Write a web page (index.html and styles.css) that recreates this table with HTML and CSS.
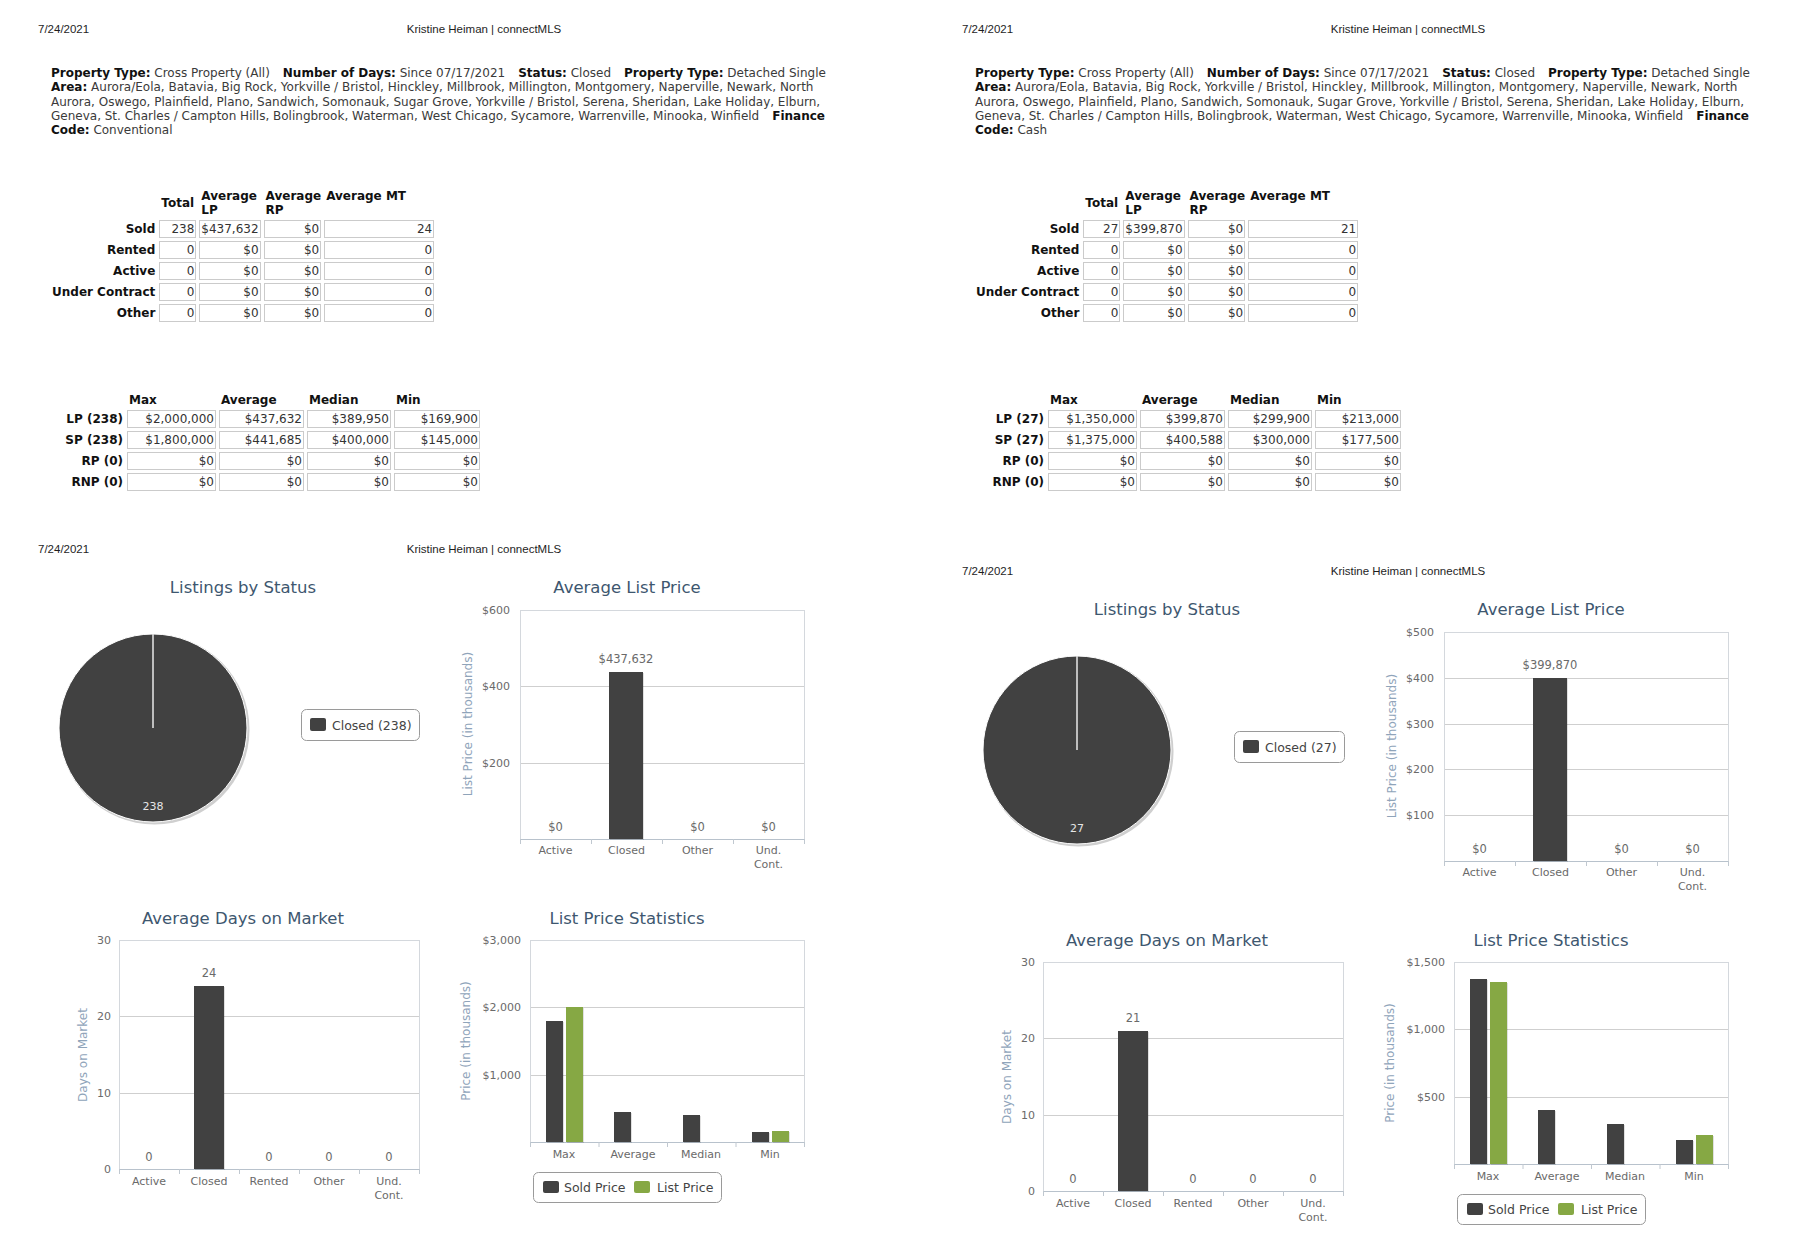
FILE: index.html
```html
<!DOCTYPE html>
<html lang="en">
<head>
<meta charset="utf-8">
<title>connectMLS Market Report</title>
<link rel="stylesheet" href="styles.css">
</head>
<body>
<div class="spread">

  <!-- ================= LEFT SHEET (Conventional) ================= -->
  <section class="sheet sheet-left">
    <div class="report">
      <header class="hdr"><span class="hdr-date">7/24/2021</span><span class="hdr-name">Kristine Heiman | connectMLS</span></header>
      <p class="criteria"><b>Property Type:</b> Cross Property (All)<span class="sp"></span><b>Number of Days:</b> Since 07/17/2021<span class="sp"></span><b>Status:</b> Closed<span class="sp"></span><b>Property Type:</b> Detached Single<br><b>Area:</b> Aurora/Eola, Batavia, Big Rock, Yorkville / Bristol, Hinckley, Millbrook, Millington, Montgomery, Naperville, Newark, North Aurora, Oswego, Plainfield, Plano, Sandwich, Somonauk, Sugar Grove, Yorkville / Bristol, Serena, Sheridan, Lake Holiday, Elburn, Geneva, St. Charles / Campton Hills, Bolingbrook, Waterman, West Chicago, Sycamore, Warrenville, Minooka, Winfield<span class="sp"></span><b>Finance Code:</b> Conventional</p>

      <table class="t1">
        <colgroup><col class="c-lbl"><col class="c-tot"><col class="c-lp"><col class="c-rp"><col class="c-mt"></colgroup>
        <thead><tr><th></th><th class="mid">Total</th><th>Average LP</th><th>Average RP</th><th>Average MT</th></tr></thead>
        <tbody>
          <tr><th>Sold</th><td>238</td><td>$437,632</td><td>$0</td><td>24</td></tr>
          <tr><th>Rented</th><td>0</td><td>$0</td><td>$0</td><td>0</td></tr>
          <tr><th>Active</th><td>0</td><td>$0</td><td>$0</td><td>0</td></tr>
          <tr><th>Under Contract</th><td>0</td><td>$0</td><td>$0</td><td>0</td></tr>
          <tr><th>Other</th><td>0</td><td>$0</td><td>$0</td><td>0</td></tr>
        </tbody>
      </table>

      <table class="t2">
        <colgroup><col class="c-lbl"><col class="c-max"><col class="c-avg"><col class="c-med"><col class="c-min"></colgroup>
        <thead><tr><th></th><th>Max</th><th>Average</th><th>Median</th><th>Min</th></tr></thead>
        <tbody>
          <tr><th>LP (238)</th><td>$2,000,000</td><td>$437,632</td><td>$389,950</td><td>$169,900</td></tr>
          <tr><th>SP (238)</th><td>$1,800,000</td><td>$441,685</td><td>$400,000</td><td>$145,000</td></tr>
          <tr><th>RP (0)</th><td>$0</td><td>$0</td><td>$0</td><td>$0</td></tr>
          <tr><th>RNP (0)</th><td>$0</td><td>$0</td><td>$0</td><td>$0</td></tr>
        </tbody>
      </table>
    </div>

    <div class="chartpage">
      <header class="hdr"><span class="hdr-date">7/24/2021</span><span class="hdr-name">Kristine Heiman | connectMLS</span></header>
      <div class="charts">
        <!-- Listings by Status -->
        <svg class="chart" width="390" height="331" viewBox="0 0 390 331">
          <text class="ttl" x="203" y="24" text-anchor="middle">Listings by Status</text>
          <circle class="pie-sh" cx="114.5" cy="160.5" r="95"/>
          <circle class="pie" cx="113" cy="159" r="94"/>
          <line class="pie-cut" x1="113" y1="159" x2="113" y2="65"/>
          <text class="pie-lbl" x="113" y="241" text-anchor="middle">238</text>
          <rect class="lg" x="261.5" y="140.5" width="118" height="31" rx="5"/>
          <rect class="sw" x="270" y="149" width="16" height="13" rx="2"/>
          <text class="lgt" x="292" y="161">Closed (238)</text>
        </svg>

        <!-- Average List Price -->
        <svg class="chart" width="400" height="331" viewBox="0 0 400 331">
          <text class="ttl" x="197" y="24" text-anchor="middle">Average List Price</text>
          <line class="grid" x1="90" y1="117.5" x2="374" y2="117.5"/>
          <line class="grid" x1="90" y1="194.5" x2="374" y2="194.5"/>
          <rect class="plot" x="90.5" y="41.5" width="284" height="229"/>
          <line class="axis" x1="90" y1="270.5" x2="375" y2="270.5"/>
          <g class="ticks"><line x1="90.5" y1="270" x2="90.5" y2="275"/><line x1="161.5" y1="270" x2="161.5" y2="275"/><line x1="232.5" y1="270" x2="232.5" y2="275"/><line x1="303.5" y1="270" x2="303.5" y2="275"/><line x1="374.5" y1="270" x2="374.5" y2="275"/></g>
          <text class="yl" x="80" y="45" text-anchor="end">$600</text>
          <text class="yl" x="80" y="121" text-anchor="end">$400</text>
          <text class="yl" x="80" y="198" text-anchor="end">$200</text>
          <text class="at" transform="translate(42,155) rotate(-90)" text-anchor="middle">List Price (in thousands)</text>
          <rect class="bar-sh" x="180" y="104" width="34" height="167"/>
          <rect class="bar" x="179" y="103" width="34" height="167"/>
          <text class="dl" x="196" y="94" text-anchor="middle">$437,632</text>
          <text class="dl" x="125.5" y="262" text-anchor="middle">$0</text>
          <text class="dl" x="267.5" y="262" text-anchor="middle">$0</text>
          <text class="dl" x="338.5" y="262" text-anchor="middle">$0</text>
          <text class="cat" x="125.5" y="285" text-anchor="middle">Active</text>
          <text class="cat" x="196.5" y="285" text-anchor="middle">Closed</text>
          <text class="cat" x="267.5" y="285" text-anchor="middle">Other</text>
          <text class="cat" x="338.5" y="285" text-anchor="middle">Und.</text>
          <text class="cat" x="338.5" y="299" text-anchor="middle">Cont.</text>
        </svg>

        <!-- Average Days on Market -->
        <svg class="chart" width="390" height="331" viewBox="0 0 390 331">
          <text class="ttl" x="203" y="24" text-anchor="middle">Average Days on Market</text>
          <line class="grid" x1="79" y1="116.5" x2="379" y2="116.5"/>
          <line class="grid" x1="79" y1="193.5" x2="379" y2="193.5"/>
          <rect class="plot" x="79.5" y="40.5" width="300" height="229"/>
          <line class="axis" x1="79" y1="269.5" x2="380" y2="269.5"/>
          <g class="ticks"><line x1="79.5" y1="269" x2="79.5" y2="274"/><line x1="139.5" y1="269" x2="139.5" y2="274"/><line x1="199.5" y1="269" x2="199.5" y2="274"/><line x1="259.5" y1="269" x2="259.5" y2="274"/><line x1="319.5" y1="269" x2="319.5" y2="274"/><line x1="379.5" y1="269" x2="379.5" y2="274"/></g>
          <text class="yl" x="71" y="44" text-anchor="end">30</text>
          <text class="yl" x="71" y="120" text-anchor="end">20</text>
          <text class="yl" x="71" y="197" text-anchor="end">10</text>
          <text class="yl" x="71" y="273" text-anchor="end">0</text>
          <text class="at" transform="translate(47,155) rotate(-90)" text-anchor="middle">Days on Market</text>
          <rect class="bar-sh" x="155" y="87" width="30" height="183"/>
          <rect class="bar" x="154" y="86" width="30" height="183"/>
          <text class="dl" x="169" y="77" text-anchor="middle">24</text>
          <text class="dl" x="109" y="261" text-anchor="middle">0</text>
          <text class="dl" x="229" y="261" text-anchor="middle">0</text>
          <text class="dl" x="289" y="261" text-anchor="middle">0</text>
          <text class="dl" x="349" y="261" text-anchor="middle">0</text>
          <text class="cat" x="109" y="285" text-anchor="middle">Active</text>
          <text class="cat" x="169" y="285" text-anchor="middle">Closed</text>
          <text class="cat" x="229" y="285" text-anchor="middle">Rented</text>
          <text class="cat" x="289" y="285" text-anchor="middle">Other</text>
          <text class="cat" x="349" y="285" text-anchor="middle">Und.</text>
          <text class="cat" x="349" y="299" text-anchor="middle">Cont.</text>
        </svg>

        <!-- List Price Statistics -->
        <svg class="chart" width="400" height="331" viewBox="0 0 400 331">
          <text class="ttl" x="197" y="24" text-anchor="middle">List Price Statistics</text>
          <line class="grid" x1="100" y1="107.5" x2="374" y2="107.5"/>
          <line class="grid" x1="100" y1="175.5" x2="374" y2="175.5"/>
          <rect class="plot" x="100.5" y="40.5" width="274" height="202"/>
          <line class="axis" x1="100" y1="242.5" x2="375" y2="242.5"/>
          <g class="ticks"><line x1="100.5" y1="242" x2="100.5" y2="247"/><line x1="169" y1="242" x2="169" y2="247"/><line x1="237.5" y1="242" x2="237.5" y2="247"/><line x1="306" y1="242" x2="306" y2="247"/><line x1="374.5" y1="242" x2="374.5" y2="247"/></g>
          <text class="yl" x="91" y="44" text-anchor="end">$3,000</text>
          <text class="yl" x="91" y="111" text-anchor="end">$2,000</text>
          <text class="yl" x="91" y="179" text-anchor="end">$1,000</text>
          <text class="at" transform="translate(40,141) rotate(-90)" text-anchor="middle">Price (in thousands)</text>
          <rect class="bar-sh" x="117" y="122" width="17" height="121"/>
          <rect class="bar" x="116" y="121" width="17" height="121"/>
          <rect class="bar-sh" x="137" y="108" width="17" height="135"/>
          <rect class="bar-g" x="136" y="107" width="17" height="135"/>
          <rect class="bar-sh" x="185" y="213" width="17" height="30"/>
          <rect class="bar" x="184" y="212" width="17" height="30"/>
          <rect class="bar-sh" x="254" y="216" width="17" height="27"/>
          <rect class="bar" x="253" y="215" width="17" height="27"/>
          <rect class="bar-sh" x="323" y="233" width="17" height="10"/>
          <rect class="bar" x="322" y="232" width="17" height="10"/>
          <rect class="bar-sh" x="343" y="232" width="17" height="11"/>
          <rect class="bar-g" x="342" y="231" width="17" height="11"/>
          <text class="cat" x="134" y="258" text-anchor="middle">Max</text>
          <text class="cat" x="203" y="258" text-anchor="middle">Average</text>
          <text class="cat" x="271" y="258" text-anchor="middle">Median</text>
          <text class="cat" x="340" y="258" text-anchor="middle">Min</text>
          <rect class="lg" x="103.5" y="272.5" width="188" height="30" rx="5"/>
          <rect class="sw" x="113" y="281" width="16" height="12" rx="2"/>
          <text class="lgt" x="134" y="292">Sold Price</text>
          <rect class="sw-g" x="204" y="281" width="16" height="12" rx="2"/>
          <text class="lgt" x="227" y="292">List Price</text>
        </svg>
      </div>
    </div>
  </section>

  <!-- ================= RIGHT SHEET (Cash) ================= -->
  <section class="sheet sheet-right">
    <div class="report">
      <header class="hdr"><span class="hdr-date">7/24/2021</span><span class="hdr-name">Kristine Heiman | connectMLS</span></header>
      <p class="criteria"><b>Property Type:</b> Cross Property (All)<span class="sp"></span><b>Number of Days:</b> Since 07/17/2021<span class="sp"></span><b>Status:</b> Closed<span class="sp"></span><b>Property Type:</b> Detached Single<br><b>Area:</b> Aurora/Eola, Batavia, Big Rock, Yorkville / Bristol, Hinckley, Millbrook, Millington, Montgomery, Naperville, Newark, North Aurora, Oswego, Plainfield, Plano, Sandwich, Somonauk, Sugar Grove, Yorkville / Bristol, Serena, Sheridan, Lake Holiday, Elburn, Geneva, St. Charles / Campton Hills, Bolingbrook, Waterman, West Chicago, Sycamore, Warrenville, Minooka, Winfield<span class="sp"></span><b>Finance Code:</b> Cash</p>

      <table class="t1">
        <colgroup><col class="c-lbl"><col class="c-tot"><col class="c-lp"><col class="c-rp"><col class="c-mt"></colgroup>
        <thead><tr><th></th><th class="mid">Total</th><th>Average LP</th><th>Average RP</th><th>Average MT</th></tr></thead>
        <tbody>
          <tr><th>Sold</th><td>27</td><td>$399,870</td><td>$0</td><td>21</td></tr>
          <tr><th>Rented</th><td>0</td><td>$0</td><td>$0</td><td>0</td></tr>
          <tr><th>Active</th><td>0</td><td>$0</td><td>$0</td><td>0</td></tr>
          <tr><th>Under Contract</th><td>0</td><td>$0</td><td>$0</td><td>0</td></tr>
          <tr><th>Other</th><td>0</td><td>$0</td><td>$0</td><td>0</td></tr>
        </tbody>
      </table>

      <table class="t2 t2-narrow">
        <colgroup><col class="c-lbl"><col class="c-max"><col class="c-avg"><col class="c-med"><col class="c-min"></colgroup>
        <thead><tr><th></th><th>Max</th><th>Average</th><th>Median</th><th>Min</th></tr></thead>
        <tbody>
          <tr><th>LP (27)</th><td>$1,350,000</td><td>$399,870</td><td>$299,900</td><td>$213,000</td></tr>
          <tr><th>SP (27)</th><td>$1,375,000</td><td>$400,588</td><td>$300,000</td><td>$177,500</td></tr>
          <tr><th>RP (0)</th><td>$0</td><td>$0</td><td>$0</td><td>$0</td></tr>
          <tr><th>RNP (0)</th><td>$0</td><td>$0</td><td>$0</td><td>$0</td></tr>
        </tbody>
      </table>
    </div>

    <div class="chartpage">
      <header class="hdr"><span class="hdr-date">7/24/2021</span><span class="hdr-name">Kristine Heiman | connectMLS</span></header>
      <div class="charts">
        <!-- Listings by Status -->
        <svg class="chart" width="390" height="331" viewBox="0 0 390 331">
          <text class="ttl" x="203" y="24" text-anchor="middle">Listings by Status</text>
          <circle class="pie-sh" cx="114.5" cy="160.5" r="95"/>
          <circle class="pie" cx="113" cy="159" r="94"/>
          <line class="pie-cut" x1="113" y1="159" x2="113" y2="65"/>
          <text class="pie-lbl" x="113" y="241" text-anchor="middle">27</text>
          <rect class="lg" x="270.5" y="140.5" width="110" height="31" rx="5"/>
          <rect class="sw" x="279" y="149" width="16" height="13" rx="2"/>
          <text class="lgt" x="301" y="161">Closed (27)</text>
        </svg>

        <!-- Average List Price -->
        <svg class="chart" width="400" height="331" viewBox="0 0 400 331">
          <text class="ttl" x="197" y="24" text-anchor="middle">Average List Price</text>
          <line class="grid" x1="90" y1="87.5" x2="374" y2="87.5"/>
          <line class="grid" x1="90" y1="133.5" x2="374" y2="133.5"/>
          <line class="grid" x1="90" y1="178.5" x2="374" y2="178.5"/>
          <line class="grid" x1="90" y1="224.5" x2="374" y2="224.5"/>
          <rect class="plot" x="90.5" y="41.5" width="284" height="229"/>
          <line class="axis" x1="90" y1="270.5" x2="375" y2="270.5"/>
          <g class="ticks"><line x1="90.5" y1="270" x2="90.5" y2="275"/><line x1="161.5" y1="270" x2="161.5" y2="275"/><line x1="232.5" y1="270" x2="232.5" y2="275"/><line x1="303.5" y1="270" x2="303.5" y2="275"/><line x1="374.5" y1="270" x2="374.5" y2="275"/></g>
          <text class="yl" x="80" y="45" text-anchor="end">$500</text>
          <text class="yl" x="80" y="91" text-anchor="end">$400</text>
          <text class="yl" x="80" y="137" text-anchor="end">$300</text>
          <text class="yl" x="80" y="182" text-anchor="end">$200</text>
          <text class="yl" x="80" y="228" text-anchor="end">$100</text>
          <text class="at" transform="translate(42,155) rotate(-90)" text-anchor="middle">List Price (in thousands)</text>
          <rect class="bar-sh" x="180" y="88" width="34" height="183"/>
          <rect class="bar" x="179" y="87" width="34" height="183"/>
          <text class="dl" x="196" y="78" text-anchor="middle">$399,870</text>
          <text class="dl" x="125.5" y="262" text-anchor="middle">$0</text>
          <text class="dl" x="267.5" y="262" text-anchor="middle">$0</text>
          <text class="dl" x="338.5" y="262" text-anchor="middle">$0</text>
          <text class="cat" x="125.5" y="285" text-anchor="middle">Active</text>
          <text class="cat" x="196.5" y="285" text-anchor="middle">Closed</text>
          <text class="cat" x="267.5" y="285" text-anchor="middle">Other</text>
          <text class="cat" x="338.5" y="285" text-anchor="middle">Und.</text>
          <text class="cat" x="338.5" y="299" text-anchor="middle">Cont.</text>
        </svg>

        <!-- Average Days on Market -->
        <svg class="chart" width="390" height="331" viewBox="0 0 390 331">
          <text class="ttl" x="203" y="24" text-anchor="middle">Average Days on Market</text>
          <line class="grid" x1="79" y1="116.5" x2="379" y2="116.5"/>
          <line class="grid" x1="79" y1="193.5" x2="379" y2="193.5"/>
          <rect class="plot" x="79.5" y="40.5" width="300" height="229"/>
          <line class="axis" x1="79" y1="269.5" x2="380" y2="269.5"/>
          <g class="ticks"><line x1="79.5" y1="269" x2="79.5" y2="274"/><line x1="139.5" y1="269" x2="139.5" y2="274"/><line x1="199.5" y1="269" x2="199.5" y2="274"/><line x1="259.5" y1="269" x2="259.5" y2="274"/><line x1="319.5" y1="269" x2="319.5" y2="274"/><line x1="379.5" y1="269" x2="379.5" y2="274"/></g>
          <text class="yl" x="71" y="44" text-anchor="end">30</text>
          <text class="yl" x="71" y="120" text-anchor="end">20</text>
          <text class="yl" x="71" y="197" text-anchor="end">10</text>
          <text class="yl" x="71" y="273" text-anchor="end">0</text>
          <text class="at" transform="translate(47,155) rotate(-90)" text-anchor="middle">Days on Market</text>
          <rect class="bar-sh" x="155" y="110" width="30" height="160"/>
          <rect class="bar" x="154" y="109" width="30" height="160"/>
          <text class="dl" x="169" y="100" text-anchor="middle">21</text>
          <text class="dl" x="109" y="261" text-anchor="middle">0</text>
          <text class="dl" x="229" y="261" text-anchor="middle">0</text>
          <text class="dl" x="289" y="261" text-anchor="middle">0</text>
          <text class="dl" x="349" y="261" text-anchor="middle">0</text>
          <text class="cat" x="109" y="285" text-anchor="middle">Active</text>
          <text class="cat" x="169" y="285" text-anchor="middle">Closed</text>
          <text class="cat" x="229" y="285" text-anchor="middle">Rented</text>
          <text class="cat" x="289" y="285" text-anchor="middle">Other</text>
          <text class="cat" x="349" y="285" text-anchor="middle">Und.</text>
          <text class="cat" x="349" y="299" text-anchor="middle">Cont.</text>
        </svg>

        <!-- List Price Statistics -->
        <svg class="chart" width="400" height="331" viewBox="0 0 400 331">
          <text class="ttl" x="197" y="24" text-anchor="middle">List Price Statistics</text>
          <line class="grid" x1="100" y1="107.5" x2="374" y2="107.5"/>
          <line class="grid" x1="100" y1="175.5" x2="374" y2="175.5"/>
          <rect class="plot" x="100.5" y="40.5" width="274" height="202"/>
          <line class="axis" x1="100" y1="242.5" x2="375" y2="242.5"/>
          <g class="ticks"><line x1="100.5" y1="242" x2="100.5" y2="247"/><line x1="169" y1="242" x2="169" y2="247"/><line x1="237.5" y1="242" x2="237.5" y2="247"/><line x1="306" y1="242" x2="306" y2="247"/><line x1="374.5" y1="242" x2="374.5" y2="247"/></g>
          <text class="yl" x="91" y="44" text-anchor="end">$1,500</text>
          <text class="yl" x="91" y="111" text-anchor="end">$1,000</text>
          <text class="yl" x="91" y="179" text-anchor="end">$500</text>
          <text class="at" transform="translate(40,141) rotate(-90)" text-anchor="middle">Price (in thousands)</text>
          <rect class="bar-sh" x="117" y="58" width="17" height="185"/>
          <rect class="bar" x="116" y="57" width="17" height="185"/>
          <rect class="bar-sh" x="137" y="61" width="17" height="182"/>
          <rect class="bar-g" x="136" y="60" width="17" height="182"/>
          <rect class="bar-sh" x="185" y="189" width="17" height="54"/>
          <rect class="bar" x="184" y="188" width="17" height="54"/>
          <rect class="bar-sh" x="254" y="203" width="17" height="40"/>
          <rect class="bar" x="253" y="202" width="17" height="40"/>
          <rect class="bar-sh" x="323" y="219" width="17" height="24"/>
          <rect class="bar" x="322" y="218" width="17" height="24"/>
          <rect class="bar-sh" x="343" y="214" width="17" height="29"/>
          <rect class="bar-g" x="342" y="213" width="17" height="29"/>
          <text class="cat" x="134" y="258" text-anchor="middle">Max</text>
          <text class="cat" x="203" y="258" text-anchor="middle">Average</text>
          <text class="cat" x="271" y="258" text-anchor="middle">Median</text>
          <text class="cat" x="340" y="258" text-anchor="middle">Min</text>
          <rect class="lg" x="103.5" y="272.5" width="188" height="30" rx="5"/>
          <rect class="sw" x="113" y="281" width="16" height="12" rx="2"/>
          <text class="lgt" x="134" y="292">Sold Price</text>
          <rect class="sw-g" x="204" y="281" width="16" height="12" rx="2"/>
          <text class="lgt" x="227" y="292">List Price</text>
        </svg>
      </div>
    </div>
  </section>

</div>
</body>
</html>
```

FILE: styles.css
```css
html, body {
  margin: 0;
  padding: 0;
  background: #ffffff;
}

.spread {
  display: flex;
  width: 1800px;
  height: 1260px;
  overflow: hidden;
}

.sheet {
  flex: none;
  width: 924px;
}
.sheet-right {
  width: 876px;
}

.report {
  padding-top: 22px;
}

/* page header: date + user */
.hdr {
  display: flex;
  padding-left: 38px;
  font: 11.5px/14px "Liberation Sans", Arial, sans-serif;
  color: #1e1e1e;
}
.hdr-date {
  width: 296px;
}
.hdr-name {
  width: 300px;
  text-align: center;
}

/* search criteria block */
.criteria {
  margin: 30px 0 0 51px;
  width: 805px;
  font: 12px/14.3px "DejaVu Sans", Verdana, sans-serif;
  color: #3a3a3a;
}
.criteria b {
  color: #111;
}
.criteria .sp {
  display: inline-block;
  width: 13px;
  height: 1px;
}

/* tables */
.t1, .t2 {
  border-collapse: separate;
  table-layout: fixed;
  font: 12px "DejaVu Sans", Verdana, sans-serif;
  color: #333;
}
.t1 {
  margin: 48.5px 0 0 49px;
  border-spacing: 3px 3px;
}
.t2 {
  margin: 62px 0 0 51px;
  border-spacing: 3px 3px;
}

.t1 .c-lbl { width: 103px; }
.t1 .c-tot { width: 37px; }
.t1 .c-lp  { width: 60px; }
.t1 .c-rp  { width: 57px; }
.t1 .c-mt  { width: 110px; }

.t2 .c-lbl { width: 70px; }
.t2-narrow .c-lbl { width: 67px; }
.t2 .c-max { width: 89px; }
.t2 .c-avg { width: 85px; }
.t2 .c-med { width: 84px; }
.t2 .c-min { width: 86px; }

.t1 thead th, .t2 thead th {
  font-weight: bold;
  color: #111;
  text-align: left;
  padding: 0 0 0 2px;
  line-height: 14px;
  vertical-align: top;
}
.t1 thead th.mid {
  vertical-align: middle;
}
.t2 thead th {
  height: 17px;
  vertical-align: bottom;
}

.t1 tbody th, .t2 tbody th {
  font-weight: bold;
  color: #111;
  text-align: right;
  padding: 0 1px 0 0;
  white-space: nowrap;
}

.t1 td, .t2 td {
  height: 16px;
  padding: 0 1px;
  border: 1px solid #cbcbcb;
  text-align: right;
  line-height: 16px;
  white-space: nowrap;
  color: #333;
}

/* chart page */
.chartpage {
  margin-top: 48px;
}
.sheet-right .chartpage {
  margin-top: 70px;
}
.charts {
  display: grid;
  grid-template-columns: 390px 400px;
  grid-auto-rows: 331px;
  margin: 13px 0 0 40px;
}
.chart {
  display: block;
}
.chart text {
  font-family: "DejaVu Sans", Verdana, sans-serif;
}
.ttl {
  font-size: 16.5px;
  fill: #3e576f;
}
.yl, .cat {
  font-size: 11px;
  fill: #6a6a6a;
}
.dl {
  font-size: 11.5px;
  fill: #6a6a6a;
}
.at {
  font-size: 12px;
  fill: #8fa4ba;
}
.lgt {
  font-size: 12.5px;
  fill: #444;
}
.plot {
  fill: none;
  stroke: #d4d8dd;
  stroke-width: 1;
}
.grid {
  stroke: #cfcfcf;
  stroke-width: 1;
}
.axis {
  stroke: #b8c2cc;
  stroke-width: 1;
}
.ticks line {
  stroke: #c0c8d0;
  stroke-width: 1;
}
.bar { fill: #414141; }
.bar-g { fill: #86a844; }
.bar-sh { fill: #000; opacity: 0.12; }
.pie { fill: #414141; stroke: #ffffff; stroke-width: 1; }
.pie-sh { fill: #cfcfcf; }
.pie-cut { stroke: #e8e8e8; stroke-width: 1.5; }
.pie-lbl { font-size: 11px; fill: #e6e6e6; }
.lg { fill: #fff; stroke: #9a9a9a; stroke-width: 1; }
.sw { fill: #414141; }
.sw-g { fill: #86a844; }
```
